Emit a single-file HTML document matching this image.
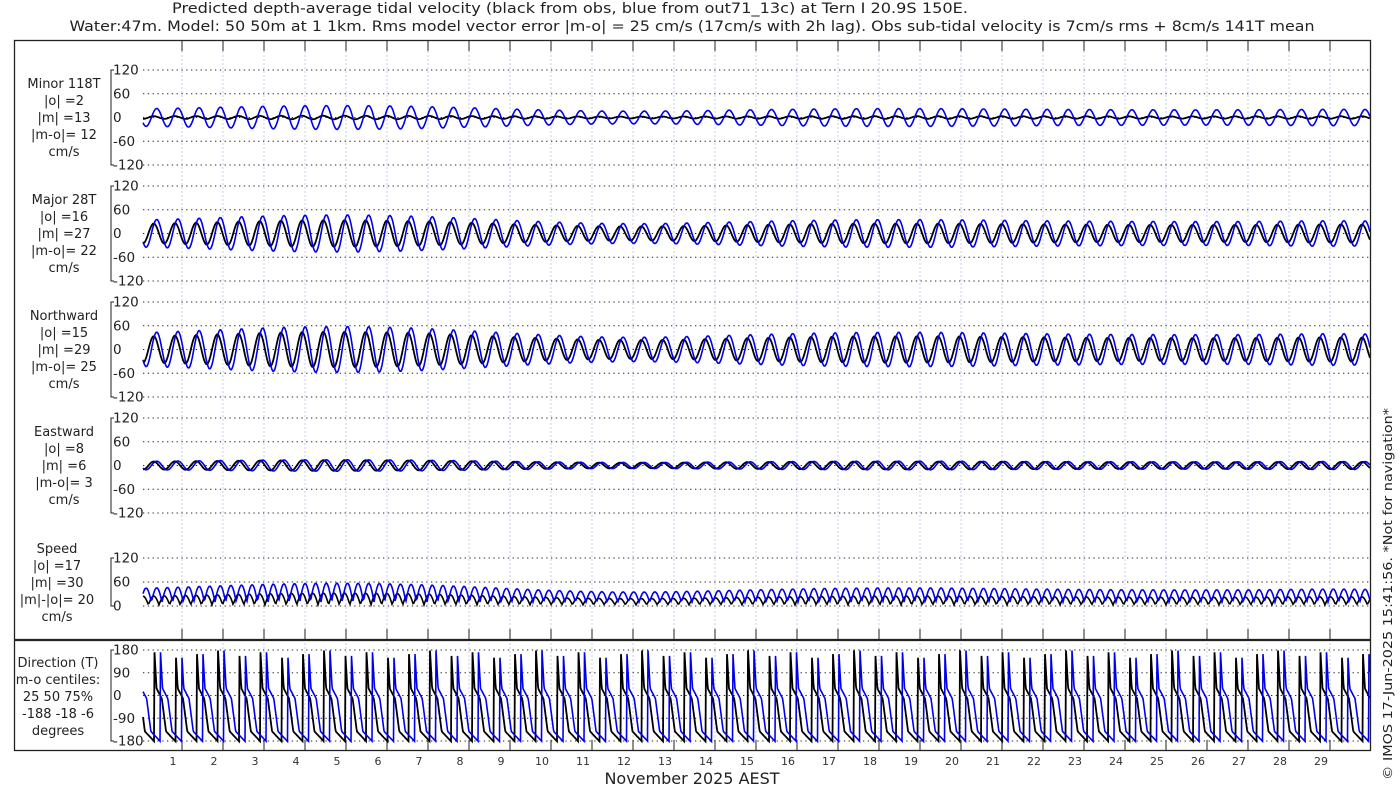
<!DOCTYPE html>
<html><head><meta charset="utf-8"><style>
html,body{margin:0;padding:0;background:#fff;width:1400px;height:800px;overflow:hidden}
svg{display:block;font-family:"DejaVu Sans","Liberation Sans",sans-serif;fill:#222}
</style></head><body>
<svg id="s" width="1400" height="800" viewBox="0 0 1400 800" xmlns="http://www.w3.org/2000/svg">
<text x="570" y="13" font-size="14.5" text-anchor="middle" textLength="796" lengthAdjust="spacingAndGlyphs">Predicted depth-average tidal velocity (black from obs, blue from out71_13c) at Tern I 20.9S 150E.</text>
<text x="692" y="31" font-size="14.5" text-anchor="middle" textLength="1245" lengthAdjust="spacingAndGlyphs">Water:47m. Model: 50 50m at 1 1km. Rms model vector error |m-o| = 25 cm/s (17cm/s with 2h lag). Obs sub-tidal velocity is 7cm/s rms + 8cm/s 141T mean</text>
<text transform="translate(1392,780) rotate(-90)" font-size="12.5" textLength="372" lengthAdjust="spacingAndGlyphs">© IMOS 17-Jun-2025 15:41:56. *Not for navigation*</text>
<text x="692" y="784" font-size="16" text-anchor="middle">November 2025 AEST</text>
<g id="g"></g>
<rect x="14.5" y="40.5" width="1356" height="710" fill="none" stroke="#222" stroke-width="1.3"/>
<line x1="14" y1="640" x2="1371" y2="640" stroke="#222" stroke-width="2.2"/>
</svg>
<script>
var g=document.getElementById('g'),h='';
var X0=143,X1=1370;
for(var k=0;k<29;k++){var x=182+41*k;
 h+='<line x1="'+x+'" y1="51" x2="'+x+'" y2="741" stroke="#b8c4ee" stroke-width="0.8" stroke-dasharray="2,2"/>';
 h+='<line x1="'+x+'" y1="40" x2="'+x+'" y2="51" stroke="#222"/>';
 h+='<line x1="'+x+'" y1="629" x2="'+x+'" y2="640" stroke="#222"/>';
 h+='<line x1="'+x+'" y1="740" x2="'+x+'" y2="751" stroke="#222"/>';
 h+='<text x="'+(173+41*k)+'" y="765" font-size="11" text-anchor="middle" fill="#333">'+(k+1)+'</text>';}
function axis(top,bot,labs){var n=labs.length;
 h+='<path d="M114,'+top+' H111 V'+bot+' H114" fill="none" stroke="#222"/>';
 for(var i=0;i<n;i++){var y=top+(bot-top)*i/(n-1);
  h+='<line x1="143" y1="'+y+'" x2="1370" y2="'+y+'" stroke="#222" stroke-dasharray="1.3,3.5"/>';
  h+='<text x="113" y="'+(y+4.5)+'" font-size="13.5">'+labs[i]+'</text>';}}
function lbl(cx,y0,lines){for(var i=0;i<lines.length;i++)h+='<text x="'+cx+'" y="'+(y0+i*17)+'" font-size="13" text-anchor="middle">'+lines[i]+'</text>';}
var P=[[70,165],[186,281],[302,397],[418,513]];
var L=[["Minor 118T","|o| =2","|m| =13","|m-o|= 12","cm/s"],["Major 28T","|o| =16","|m| =27","|m-o|= 22","cm/s"],["Northward","|o| =15","|m| =29","|m-o|= 25","cm/s"],["Eastward","|o| =8","|m| =6","|m-o|= 3","cm/s"]];
var A=[[27,4],[42,30],[52,40],[13,12]];
for(var p=0;p<4;p++){axis(P[p][0],P[p][1],["120","60","0","-60","-120"]);lbl(64,P[p][0]+18,L[p]);}
axis(558,606,["120","60","0"]);lbl(57,553,["Speed","|o| =17","|m| =30","|m|-|o|= 20","cm/s"]);
axis(650,741,["180","90","0","-90","-180"]);lbl(58,667,["Direction (T)","m-o centiles:","25  50  75%","-188  -18    -6","degrees"]);
var T=21.2;
function env(x){return 0.72+0.4*Math.exp(-Math.pow((x-340)/170,2))-0.15*Math.exp(-Math.pow((x-620)/120,2))+0.12*Math.exp(-Math.pow((x-900)/150,2))+0.05*Math.exp(-Math.pow((x-1330)/60,2));}
function path(f,col,w){var d='';for(var x=X0;x<=X1;x+=1){d+=(x==X0?'M':'L')+x+','+f(x).toFixed(1);}
 h+='<path d="'+d+'" fill="none" stroke="'+col+'" stroke-width="'+w+'"/>';}
for(var p=0;p<4;p++){(function(p){var c=(P[p][0]+P[p][1])/2,s=(P[p][1]-P[p][0])/240;
 path(function(x){return c-s*A[p][1]*env(x)*Math.sin(2*Math.PI*x/T)},'#000',1.8);
 path(function(x){return c-s*A[p][0]*env(x)*Math.sin(2*Math.PI*(x-3)/T)},'#0000ee',1.6);})(p);}
path(function(x){return 606-0.4*(3+26*env(x)*Math.abs(Math.sin(2*Math.PI*x/T)))},'#000',1.6);
path(function(x){return 606-0.4*(10+42*env(x)*Math.abs(Math.sin(2*Math.PI*(x-3)/T)))},'#0000ee',1.6);
function dir(ph){ph=ph-Math.floor(ph);var v;
 if(ph<0.1)v=180-150*ph/0.1;else if(ph<0.35)v=30-40*(ph-0.1)/0.25;else if(ph<0.55)v=-10-130*(ph-0.35)/0.2;else v=-140-40*(ph-0.55)/0.45;return 696-v*91/360;}
function dpath(off,col,w){var d='';for(var x=X0;x<=X1;x+=0.5){var y=dir((x-off)/T);
 d+=(x==X0?'M':'L')+x+','+y.toFixed(1);}h+='<path d="'+d+'" fill="none" stroke="'+col+'" stroke-width="'+w+'"/>';}
dpath(6,'#000',1.8);dpath(12,'#0000ee',1.6);
g.innerHTML=h;
</script>
</body></html>
